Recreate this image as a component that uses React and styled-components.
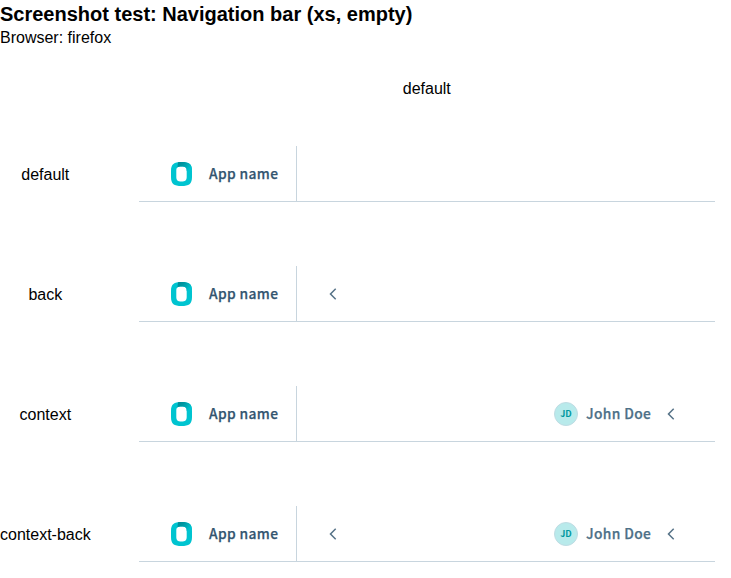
import React from "react";
import styled, { createGlobalStyle } from "styled-components";

const GlobalStyle = createGlobalStyle`
  * { box-sizing: border-box; }
  body { margin: 0; background: #fff; color: #000; font: 16px/18px "Liberation Sans", Arial, sans-serif; overflow: hidden; }
`;
const Page = styled.main`
  width: 731px;
  height: 578px;
  overflow: hidden;
`;
const Title = styled.h1`
  margin: 0;
  padding-top: 2px;
  font-size: 20px;
  line-height: 24px;
  height: 29px;
`;
const Browser = styled.p`
  margin: 0;
  height: 51px;
`;
const ColumnHeader = styled.div`
  width: 575.6px;
  height: 18px;
  margin-left: 139px;
  text-align: center;
`;
const Row = styled.section`
  display: grid;
  grid-template-columns: 91px 576px;
  column-gap: 48px;
  height: 56px;
  margin-top: ${(p) => (p.$first ? "48px" : "64px")};
`;
const RowLabel = styled.div`
  width: 90.6px;
  text-align: center;
  white-space: nowrap;
  line-height: 58px;
`;
const Bar = styled.nav`
  display: flex;
  align-items: center;
  height: 56px;
  border-bottom: 1px solid #c8d5de;
  color: #4d7087;
  font: 500 13.8px/24px "Noto Sans CJK SC", sans-serif;
`;
const Brand = styled.div`
  display: flex;
  align-items: center;
  width: 158px;
  height: 55px;
  padding-left: 32px;
  border-right: 1px solid #c8d5de;
`;
const Logo = styled.svg`
  width: 21px;
  height: 24px;
  margin-right: 17px;
`;
const AppName = styled.span`
  padding-bottom: 2px;
  color: #335570;
  letter-spacing: 0.36px;
  -webkit-text-stroke: 0.25px currentColor;
  white-space: nowrap;
`;
const Chevron = styled.svg`
  width: 8px;
  height: 12px;
  fill: none;
  stroke: #557287;
  stroke-width: 1.5;
`;
const Back = styled.div`
  display: flex;
  margin-left: 32px;
`;
const User = styled.div`
  display: flex;
  align-items: center;
  margin-left: auto;
  margin-right: 40px;
`;
const Avatar = styled.span`
  width: 24px;
  height: 24px;
  margin-right: 8px;
  border: 1px solid #bfdce3;
  border-radius: 50%;
  background: #b8eaeb;
  color: #0099a0;
  font-size: 9px;
  font-weight: 700;
  line-height: 22px;
  text-align: center;
`;
const UserName = styled.span`
  width: 65px;
  margin-right: 16px;
  padding-bottom: 2px;
  letter-spacing: 0.36px;
  -webkit-text-stroke: 0.25px currentColor;
  white-space: nowrap;
`;

const ChevronLeft = () => (
  <Chevron viewBox="0 0 8 12"><path d="M6.7 .8 1.5 6l5.2 5.2" /></Chevron>
);
const BrandLogo = () => (
  <Logo viewBox="0 0 21 24">
    <defs>
      <linearGradient id="shade" x1="0" x2="1" y1="0" y2="0.4">
        <stop offset="0" stopColor="#008a94" />
        <stop offset=".45" stopColor="#0099a3" />
        <stop offset="1" stopColor="#00c4d0" />
      </linearGradient>
    </defs>
    <path fill="#00c4d0" fillRule="evenodd" d="M10.5 0C18 0 21 2 21 9v6c0 7-3 9-10.5 9S0 22 0 15V9C0 2 3 0 10.5 0Zm0 4.6C6.6 4.6 5.3 5.8 5.3 9v6c0 3.2 1.3 4.6 5.2 4.6s5.2-1.4 5.2-4.6V9c0-3.2-1.3-4.4-5.2-4.4Z" />
    <path fill="url(#shade)" d="M7 .2C8 0 9.2 0 10.5 0 18 0 21 2 21 8l-5.3 1c0-3.2-1.3-4.4-5.2-4.4-2 0-3.3.3-4.1 1Z" />
  </Logo>
);

const rows = [
  { name: "default" },
  { name: "back", back: true },
  { name: "context", user: true },
  { name: "context-back", back: true, user: true },
];

export default function App() {
  return (
    <Page>
      <GlobalStyle />
      <Title>Screenshot test: Navigation bar (xs, empty)</Title>
      <Browser>Browser: firefox</Browser>
      <ColumnHeader>default</ColumnHeader>
      {rows.map((row, i) => (
        <Row key={row.name} $first={i === 0}>
          <RowLabel>{row.name}</RowLabel>
          <Bar>
            <Brand><BrandLogo /><AppName>App name</AppName></Brand>
            {row.back && <Back><ChevronLeft /></Back>}
            {row.user && <User><Avatar>JD</Avatar><UserName>John Doe</UserName><ChevronLeft /></User>}
          </Bar>
        </Row>
      ))}
    </Page>
  );
}
